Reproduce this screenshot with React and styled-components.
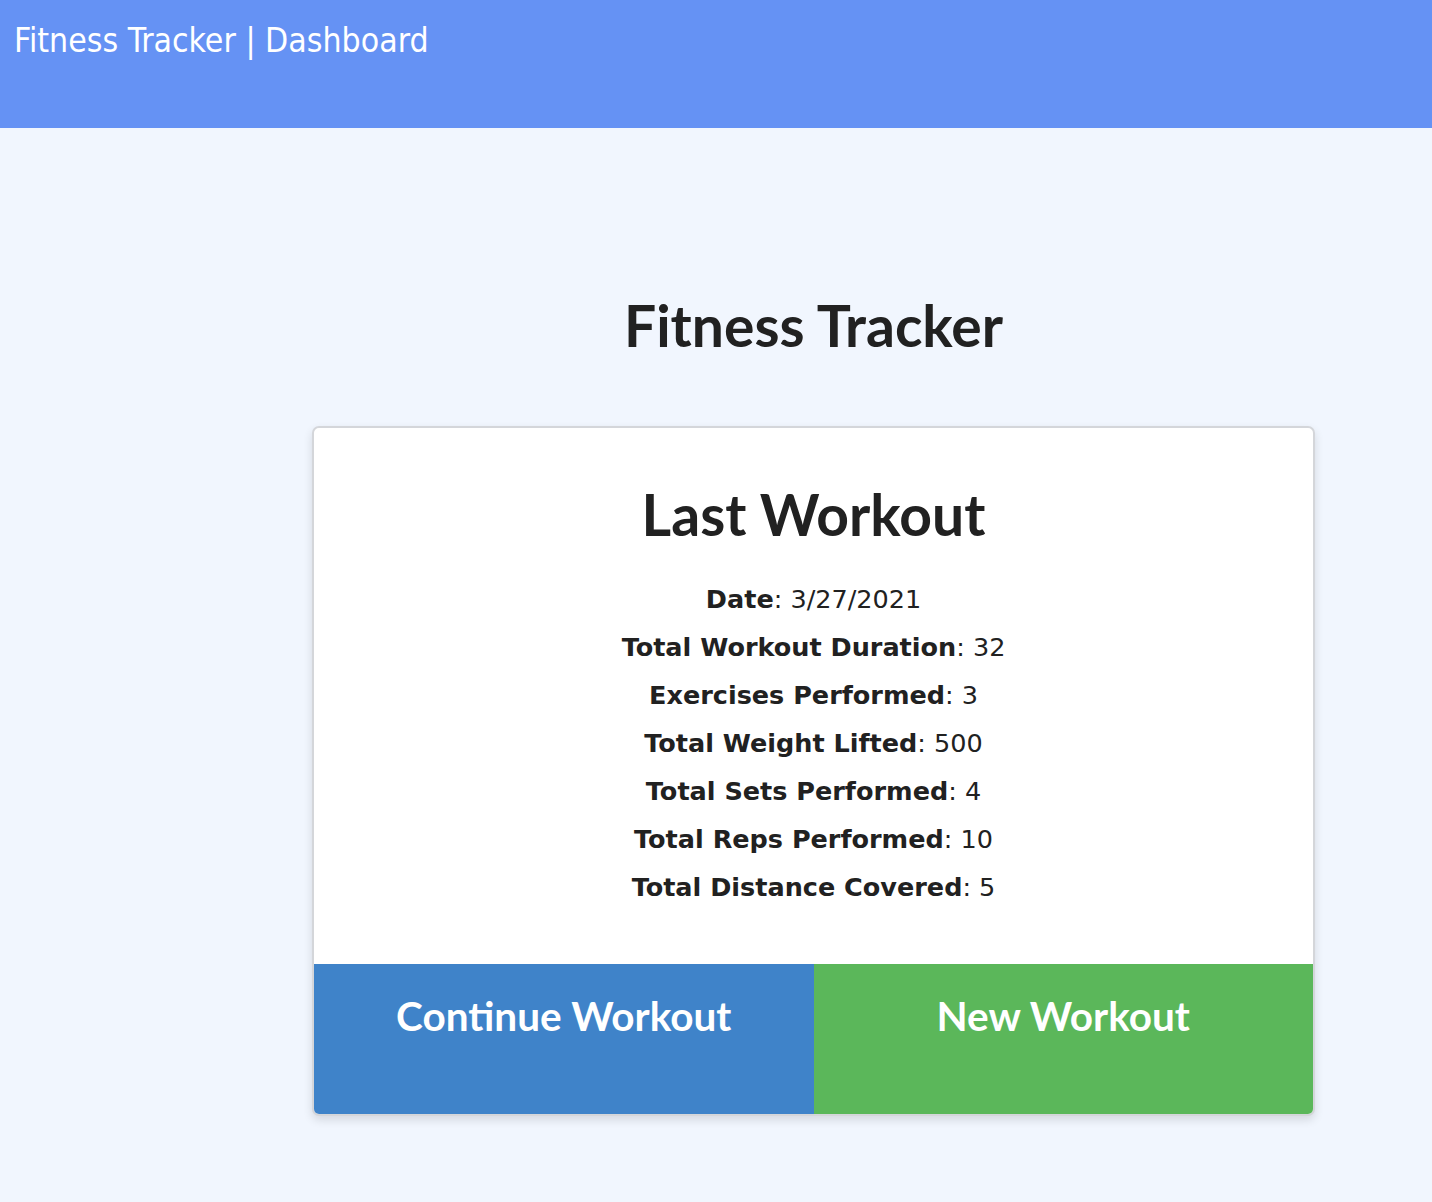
import styled, { createGlobalStyle } from "styled-components";

const GlobalStyle = createGlobalStyle`
  html, body {
    margin: 0;
    padding: 0;
    background: #f1f6fe;
  }
  body {
    font-family: "DejaVu Sans", Verdana, sans-serif;
    color: #212121;
  }
`;

const TopBar = styled.header`
  height: 128px;
  background: #6592f4;
  padding: 21px 14px 0;
  box-sizing: border-box;
`;

const Brand = styled.div`
  color: #ffffff;
  font-size: 33.5px;
  font-family: "DejaVu Sans Condensed", "DejaVu Sans", sans-serif;
  line-height: 40px;
`;

const Main = styled.main`
  width: 1003px;
  margin-left: 312px;
  padding-top: 165px;
  padding-bottom: 88px;
`;

const Title = styled.h1`
  margin: 0 0 69px;
  text-align: center;
  font-family: Lato, "Open Sans", sans-serif;
  font-weight: 700;
  font-size: 57px;
  line-height: 64px;
`;

const Card = styled.section`
  background: #ffffff;
  border: 2px solid #d4d6da;
  border-radius: 7px;
  box-shadow: 0 4px 10px rgba(0, 0, 0, 0.12);
  overflow: hidden;
`;

const CardBody = styled.div`
  padding: 54px 20px 53px;
  text-align: center;
`;

const CardTitle = styled.h2`
  margin: 0 0 29px;
  font-family: Lato, "Open Sans", sans-serif;
  font-weight: 700;
  font-size: 57px;
  line-height: 64px;
`;

const Stat = styled.p`
  margin: 0;
  font-size: 25.5px;
  line-height: 48px;
  font-family: "DejaVu Sans", Verdana, sans-serif;
  b {
    font-weight: 700;
  }
`;

const Actions = styled.div`
  display: grid;
  grid-template-columns: 1fr 1fr;
`;

const Action = styled.button`
  height: 150px;
  border: 0;
  margin: 0;
  padding: 27px 0 0;
  display: flex;
  justify-content: center;
  align-items: flex-start;
  background: ${props => props.bg};
  color: #ffffff;
  font-family: Lato, "Open Sans", sans-serif;
  font-weight: 700;
  font-size: 40.5px;
  cursor: pointer;
`;

const stats = [
  ["Date", "3/27/2021"],
  ["Total Workout Duration", "32"],
  ["Exercises Performed", "3"],
  ["Total Weight Lifted", "500"],
  ["Total Sets Performed", "4"],
  ["Total Reps Performed", "10"],
  ["Total Distance Covered", "5"],
];

function App() {
  return (
    <>
      <GlobalStyle />
      <TopBar>
        <Brand>Fitness Tracker | Dashboard</Brand>
      </TopBar>
      <Main>
        <Title>Fitness Tracker</Title>
        <Card>
          <CardBody>
            <CardTitle>Last Workout</CardTitle>
            {stats.map(([label, value]) => (
              <Stat key={label}>
                <b>{label}</b>: {value}
              </Stat>
            ))}
          </CardBody>
          <Actions>
            <Action bg="#3f83c9">Continue Workout</Action>
            <Action bg="#5bb75a">New Workout</Action>
          </Actions>
        </Card>
      </Main>
    </>
  );
}

export default App;
